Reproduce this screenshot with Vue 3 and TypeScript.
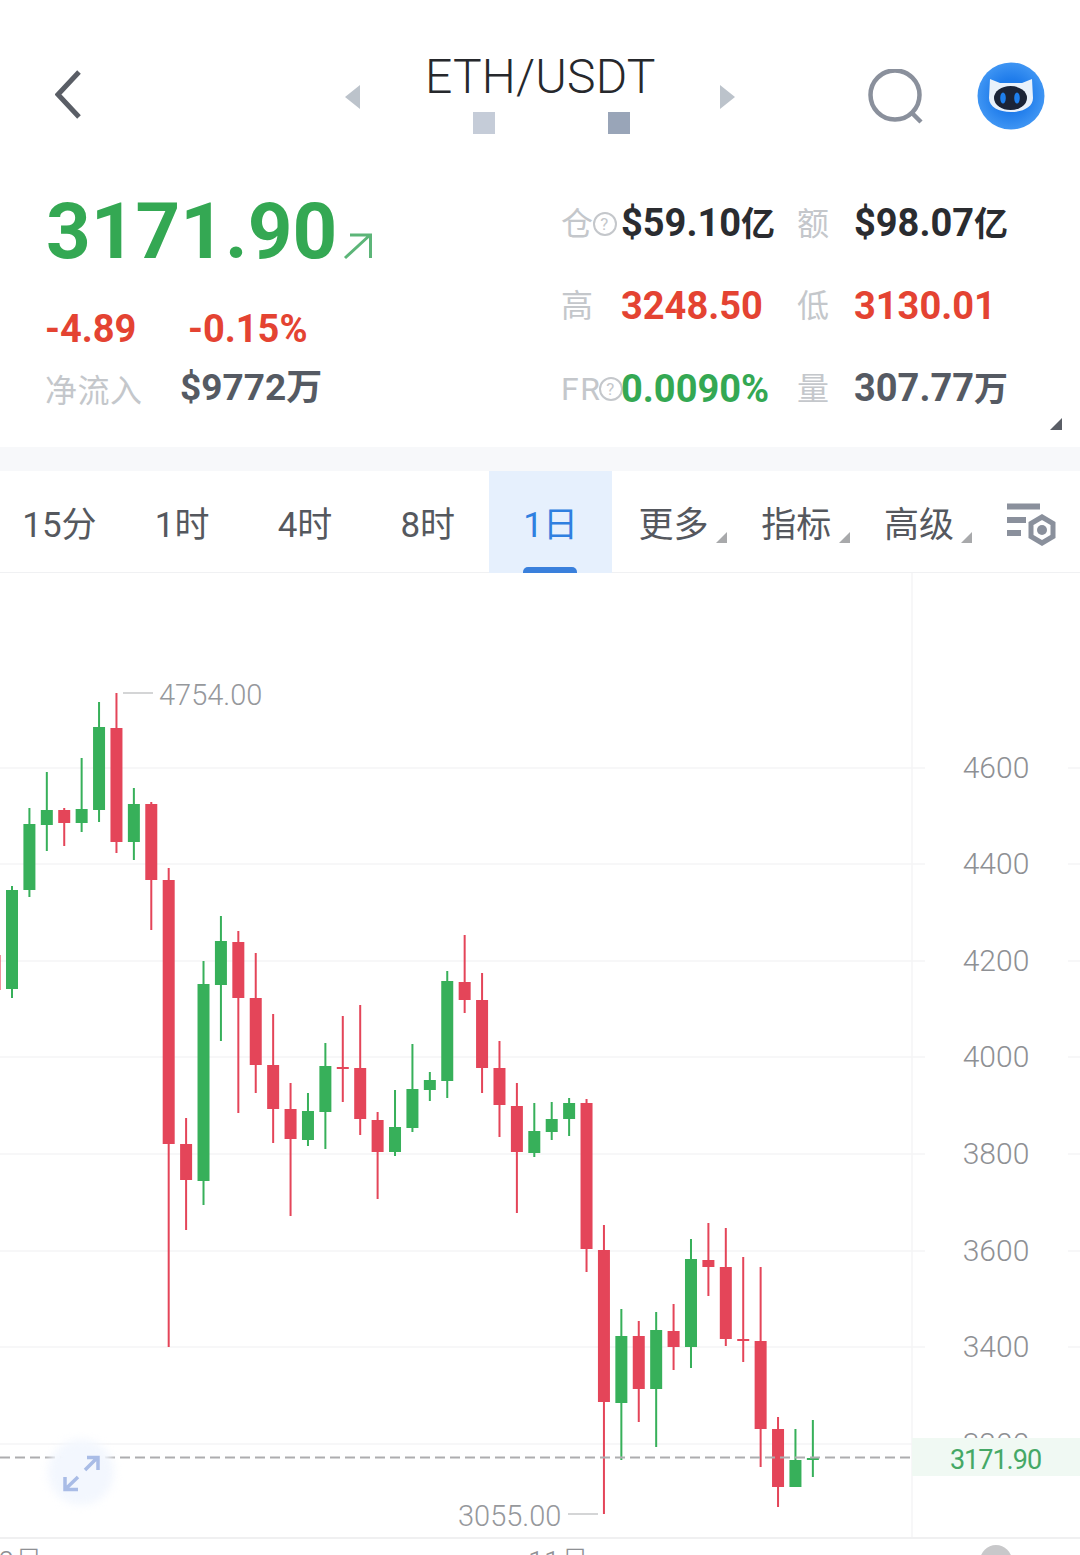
<template>
  <div class="page">
    <header class="head">
      <div class="head-left">
        <svg class="back" width="26" height="52" viewBox="0 0 26 52">
          <path d="M24 3 L3 25.5 L24 48" fill="none" stroke="#5a5e66" stroke-width="5" />
        </svg>
      </div>
      <div class="head-mid">
        <i class="tri-left"></i>
        <div class="symbol">
          <div class="symbol-name">ETH/USDT</div>
          <div class="symbol-dots">
            <i class="dot dot-a"></i>
            <i class="dot dot-b"></i>
          </div>
        </div>
        <i class="tri-right"></i>
      </div>
      <div class="head-right">
        <svg width="56" height="56" viewBox="0 0 56 56">
          <ellipse cx="27" cy="26" rx="24.5" ry="24.5" fill="none" stroke="#8a909c" stroke-width="4.5" />
          <path d="M44 44 L53 53" stroke="#8a909c" stroke-width="4.5" />
        </svg>
        <svg width="68" height="68" viewBox="0 0 68 68">
          <defs>
            <radialGradient id="ava">
              <stop offset="0.5" stop-color="#1f7ceb" />
              <stop offset="1" stop-color="#3f95f3" />
            </radialGradient>
          </defs>
          <circle cx="34" cy="34" r="33.5" fill="url(#ava)" />
          <path d="M13 17 L23 21 H45 L55 17 L56 36 C56 45 46 50 34 50 C22 50 12 45 12 36 Z" fill="#e9f1fb" />
          <ellipse cx="33.5" cy="36" rx="16.5" ry="12" fill="#1b2438" />
          <ellipse cx="26" cy="36" rx="2.8" ry="5.5" fill="#1e7fee" />
          <ellipse cx="40" cy="36" rx="2.8" ry="5.5" fill="#1e7fee" />
        </svg>
      </div>
    </header>

    <section class="stats">
      <div class="stats-left">
        <div class="price-row">
          <span class="price">3171.90</span>
          <svg class="price-arrow" width="30" height="28" viewBox="0 0 30 28">
            <path d="M2 26 L27 3 M7 3 H27.5 V26" fill="none" stroke="#5cb578" stroke-width="3" />
          </svg>
        </div>
        <div class="change-row">
          <span class="change change-a">-4.89</span>
          <span class="change">-0.15%</span>
        </div>
        <div class="inflow-row">
          <span class="label inflow-label">净流入</span>
          <span class="val val-soft">$9772<small>万</small></span>
        </div>
      </div>
      <div class="stats-right">
        <template v-for="cell in cells" :key="cell.label">
          <div class="label cell-label">
            <span>{{ cell.label }}</span>
            <svg v-if="cell.help" class="help" width="26" height="26" viewBox="0 0 26 26">
              <circle cx="13" cy="13" r="11" fill="#fff" stroke="#c4c7cb" stroke-width="2" />
              <text x="13" y="19" text-anchor="middle" class="help-mark">?</text>
            </svg>
          </div>
          <div class="val" :class="cell.tone">{{ cell.value }}<small v-if="cell.unit">{{ cell.unit }}</small></div>
        </template>
      </div>
      <i class="corner"></i>
    </section>

    <div class="band"></div>

    <nav class="tabs">
      <div v-for="tab in tabs" :key="tab.name" class="tab" :class="{ active: tab.active }">
        <span class="tab-name">{{ tab.name }}</span>
        <i v-if="tab.menu" class="tab-tri"></i>
        <i v-if="tab.active" class="tab-bar"></i>
      </div>
      <div class="tab-icon">
        <svg width="50" height="44" viewBox="0 0 50 44">
          <path d="M1 3.5 H34 M1 17 H20 M1 30 H15" fill="none" stroke="#8a909c" stroke-width="6" />
          <path d="M36 14 L47 20.5 V33.5 L36 40 L25 33.5 V20.5 Z" fill="none" stroke="#8a909c" stroke-width="5" />
          <circle cx="36" cy="27" r="5" fill="#8a909c" />
        </svg>
      </div>
    </nav>

    <svg class="chart" width="1080" height="982" viewBox="0 573 1080 982">
      <g v-for="y in gridYs" :key="y">
        <path :d="`M0 ${y}H925`" class="grid" />
        <path :d="`M1068 ${y}H1080`" class="grid" />
      </g>
      <path d="M912 573V1538" class="grid" />
      <path d="M0 1538H1080" class="grid grid-strong" />

      <text v-for="t in axis" :key="t.label" x="996" :y="t.y + 10" text-anchor="middle" class="axis">{{ t.label }}</text>

      <g v-for="(c, i) in candles" :key="i">
        <rect :x="c.x - 1" :y="c.high" width="2" :height="c.low - c.high" :fill="c.up ? green : red" />
        <rect :x="c.x - 6" :y="c.top" width="12" :height="Math.max(c.bottom - c.top, 2)" :fill="c.up ? green : red" />
      </g>

      <path d="M123 693H153" class="mark" />
      <text x="159" y="705" class="peak">4754.00</text>
      <path d="M568 1514H598" class="mark" />
      <text x="458" y="1526" class="peak">3055.00</text>

      <rect x="912" y="1438" width="168" height="38" fill="#f0f9f3" />
      <path d="M0 1457.5H910" class="last-line" />
      <text x="995.5" y="1469" text-anchor="middle" class="last-price">3171.90</text>

      <text x="-2" y="1572" class="date">0月</text>
      <text x="528" y="1572" class="date">11月</text>
      <circle cx="996" cy="1561" r="16" fill="#c8c8ca" />

      <circle cx="81" cy="1472" r="33" class="zoom-bg" />
      <path d="M85 1470L98 1457M87 1457.5H98V1470M78 1477L65 1489.5M65 1477V1489.5H78" fill="none" stroke="#a9bce6" stroke-width="3.5" />
    </svg>
  </div>
</template>

<script setup lang="ts">
interface Candle {
  x: number
  top: number
  bottom: number
  high: number
  low: number
  up: boolean
}

const green = '#37b05a'
const red = '#e44559'

const cells = [
  { label: '仓', help: true, value: '$59.10', unit: '亿', tone: 'dark' },
  { label: '额', help: false, value: '$98.07', unit: '亿', tone: 'dark' },
  { label: '高', help: false, value: '3248.50', unit: '', tone: 'down' },
  { label: '低', help: false, value: '3130.01', unit: '', tone: 'down' },
  { label: 'FR', help: true, value: '0.0090%', unit: '', tone: 'up' },
  { label: '量', help: false, value: '307.77', unit: '万', tone: 'soft' },
]

const tabs = [
  { name: '15分' },
  { name: '1时' },
  { name: '4时' },
  { name: '8时' },
  { name: '1日', active: true },
  { name: '更多', menu: true },
  { name: '指标', menu: true },
  { name: '高级', menu: true },
]

const gridYs = [768, 864, 961, 1057, 1154, 1251, 1347, 1444]

const axis = [
  { label: '4600', y: 768 },
  { label: '4400', y: 864 },
  { label: '4200', y: 961 },
  { label: '4000', y: 1057 },
  { label: '3800', y: 1154 },
  { label: '3600', y: 1251 },
  { label: '3400', y: 1347 },
  { label: '3200', y: 1444 },
]

// top, bottom, high, low, up
const raw: [number, number, number, number, boolean][] = [
  [955, 990, 950, 996, false],
  [890, 989, 886, 998, true],
  [824, 890, 808, 897, true],
  [810, 825, 772, 851, true],
  [810, 823, 808, 846, false],
  [809, 823, 758, 832, true],
  [727, 810, 702, 822, true],
  [728, 842, 693, 853, false],
  [804, 842, 788, 860, true],
  [804, 880, 802, 930, false],
  [880, 1144, 868, 1347, false],
  [1144, 1180, 1118, 1230, false],
  [984, 1181, 961, 1205, true],
  [941, 985, 916, 1041, true],
  [942, 998, 931, 1113, false],
  [998, 1065, 953, 1093, false],
  [1065, 1109, 1014, 1143, false],
  [1109, 1139, 1083, 1216, false],
  [1111, 1140, 1093, 1146, true],
  [1066, 1112, 1043, 1149, true],
  [1067, 1068, 1016, 1102, false],
  [1068, 1119, 1005, 1135, false],
  [1120, 1152, 1112, 1199, false],
  [1127, 1152, 1090, 1156, true],
  [1089, 1128, 1044, 1132, true],
  [1080, 1090, 1072, 1101, true],
  [981, 1081, 971, 1098, true],
  [982, 1000, 935, 1013, false],
  [1000, 1068, 973, 1093, false],
  [1068, 1105, 1041, 1137, false],
  [1106, 1152, 1083, 1213, false],
  [1131, 1153, 1103, 1157, true],
  [1119, 1132, 1102, 1140, true],
  [1103, 1119, 1098, 1136, true],
  [1103, 1249, 1099, 1272, false],
  [1250, 1402, 1225, 1514, false],
  [1336, 1403, 1309, 1460, true],
  [1336, 1389, 1321, 1422, false],
  [1330, 1389, 1312, 1447, true],
  [1331, 1347, 1304, 1370, false],
  [1259, 1347, 1239, 1368, true],
  [1260, 1267, 1223, 1296, false],
  [1267, 1339, 1228, 1346, false],
  [1339, 1340, 1257, 1362, false],
  [1341, 1429, 1267, 1467, false],
  [1429, 1487, 1417, 1507, false],
  [1460, 1487, 1429, 1487, true],
  [1458, 1460, 1420, 1477, true],
]

const candles: Candle[] = raw.map((r, i) => ({
  x: -5.41 + i * 17.41,
  top: r[0],
  bottom: r[1],
  high: r[2],
  low: r[3],
  up: r[4],
}))
</script>

<style scoped>
.page {
  width: 1080px;
  height: 1555px;
  overflow: hidden;
  background: #fff;
  font-family: Roboto, "Noto Sans CJK SC", sans-serif;
}

.head {
  display: grid;
  grid-template-columns: 345px 390px 345px;
  height: 160px;
}

.head-left {
  padding: 69px 0 0 55px;
}

.back {
  display: block;
}

.head-mid {
  display: flex;
  justify-content: space-between;
  padding-top: 85px;
}

.tri-left,
.tri-right {
  width: 0;
  height: 0;
  border-top: 12px solid transparent;
  border-bottom: 12px solid transparent;
}

.tri-left {
  border-right: 15px solid #bcc3cb;
}

.tri-right {
  border-left: 15px solid #bcc3cb;
}

.symbol {
  margin-top: -34px;
  width: 230px;
}

.symbol-name {
  font-size: 48px;
  line-height: 52px;
  font-weight: 300;
  letter-spacing: 0.2px;
  color: #26282c;
  text-align: center;
  white-space: nowrap;
}

.symbol-dots {
  display: flex;
  justify-content: space-between;
  margin: 9px 25px 0 48px;
}

.dot {
  width: 22px;
  height: 22px;
}

.dot-a {
  background: #c5ccd8;
}

.dot-b {
  background: #99a5b8;
}

.head-right {
  display: flex;
  justify-content: flex-end;
  gap: 53px;
  padding: 62px 35px 0 0;
  align-items: flex-start;
}

.head-right svg:first-child {
  margin-top: 7px;
}

.stats {
  position: relative;
  display: flex;
  height: 287px;
  padding-left: 45px;
}

.stats-left {
  width: 516px;
}

.price-row {
  display: flex;
  align-items: flex-end;
  height: 100px;
  margin-top: 18px;
  margin-left: 1px;
}

.price {
  font-size: 78px;
  line-height: 92px;
  font-weight: 700;
  color: #34a853;
}

.price-arrow {
  margin: 0 0 18px 6px;
}

.change-row {
  display: flex;
  margin-top: 28px;
  line-height: 46px;
}

.change {
  font-size: 38px;
  font-weight: 700;
  color: #e44332;
}

.change-a {
  width: 143px;
}

.inflow-row {
  display: flex;
  align-items: center;
  margin-top: 12px;
  height: 48px;
}

.inflow-label {
  width: 135px;
  letter-spacing: 0.5px;
}

.label {
  font-size: 32px;
  color: #c4c7cb;
  font-weight: 400;
}

.stats-right {
  display: grid;
  grid-template-columns: 60px 176px 57px auto;
  grid-auto-rows: 82.5px;
  align-items: center;
  align-content: start;
  padding-top: 22.5px;
}

.cell-label {
  display: flex;
  align-items: center;
  white-space: nowrap;
  line-height: 40px;
  letter-spacing: 1.5px;
}

.help {
  flex: none;
  margin-left: -3px;
  position: relative;
  z-index: 0;
}

.help-mark {
  font-size: 17px;
  fill: #c4c7cb;
}

.val {
  position: relative;
  font-size: 38px;
  line-height: 46px;
  font-weight: 700;
  color: #2a2c30;
  white-space: nowrap;
}

.val small {
  font-size: 34px;
}

.val-soft,
.val.soft {
  color: #555a63;
}

.val-soft {
  font-size: 37px;
}

.val-soft small {
  font-size: 36px;
}

.val.down {
  color: #e44332;
}

.val.up {
  color: #34a853;
}

.corner {
  position: absolute;
  right: 18px;
  bottom: 17px;
  width: 0;
  height: 0;
  border-left: 12px solid transparent;
  border-bottom: 12px solid #5a5e66;
}

.band {
  height: 24px;
  background: #f7f8fa;
}

.tabs {
  display: flex;
  height: 102px;
  margin-left: -2px;
  font-size: 35px;
  font-weight: 400;
  color: #55585e;
}

.tab {
  position: relative;
  flex: none;
  width: 122.8px;
  display: flex;
  align-items: center;
  justify-content: center;
  white-space: nowrap;
}

.tab-name {
  margin-top: -2px;
}

.tab.active {
  color: #2f7fe0;
  background: #e6f0fd;
}

.tab-bar {
  position: absolute;
  left: 34px;
  bottom: 0;
  width: 54px;
  height: 6px;
  background: #3a80dc;
  border-radius: 5px 5px 0 0;
}

.tab-tri {
  position: absolute;
  right: 8px;
  top: 61px;
  width: 0;
  height: 0;
  border-left: 11px solid transparent;
  border-bottom: 11px solid #a8a9ab;
}

.tab-icon {
  padding: 32px 0 0 26px;
}

.chart {
  display: block;
  border-top: 1px solid #f0f1f3;
  margin-top: -1px;
  overflow: hidden;
}

.grid {
  stroke: #f5f5f6;
  stroke-width: 1.5;
  fill: none;
}

.grid-strong {
  stroke: #f0f0f1;
  stroke-width: 2;
}

.axis {
  font-size: 30px;
  font-weight: 300;
  fill: #8e9094;
}

.mark {
  stroke: #c6c7c9;
  stroke-width: 1.5;
  fill: none;
}

.peak {
  font-size: 29px;
  font-weight: 300;
  fill: #96989c;
}

.last-line {
  stroke: #adadaf;
  stroke-width: 2;
  stroke-dasharray: 10 5;
  fill: none;
}

.last-price {
  font-size: 27px;
  letter-spacing: -1px;
  fill: #45a866;
}

.date {
  font-size: 29px;
  font-weight: 300;
  fill: #8e9094;
}

.zoom-bg {
  fill: #f3f7fe;
  filter: blur(4px);
}
</style>
